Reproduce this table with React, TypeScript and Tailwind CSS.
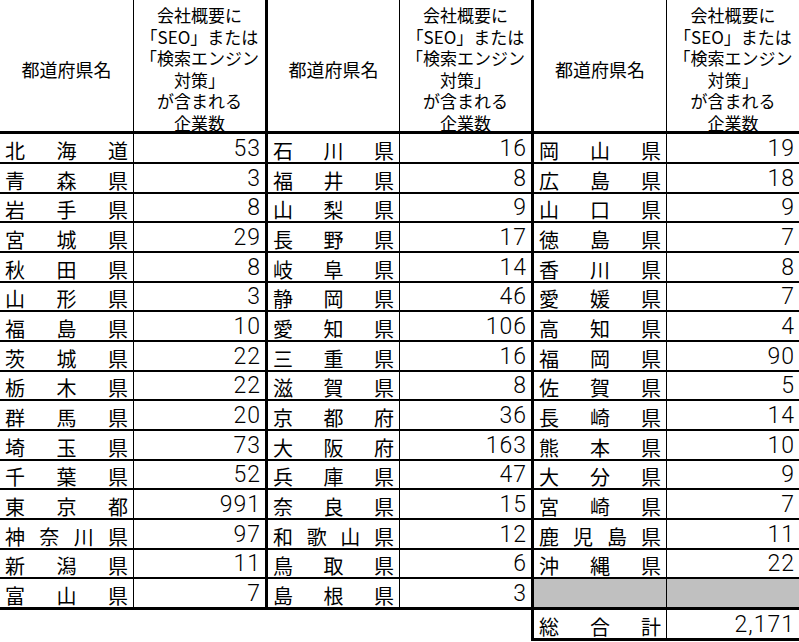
import React from 'react';

type Entry = [string, string];

const left: Entry[] = [
  ['北海道', '53'], ['青森県', '3'], ['岩手県', '8'], ['宮城県', '29'],
  ['秋田県', '8'], ['山形県', '3'], ['福島県', '10'], ['茨城県', '22'],
  ['栃木県', '22'], ['群馬県', '20'], ['埼玉県', '73'], ['千葉県', '52'],
  ['東京都', '991'], ['神奈川県', '97'], ['新潟県', '11'], ['富山県', '7'],
];

const middle: Entry[] = [
  ['石川県', '16'], ['福井県', '8'], ['山梨県', '9'], ['長野県', '17'],
  ['岐阜県', '14'], ['静岡県', '46'], ['愛知県', '106'], ['三重県', '16'],
  ['滋賀県', '8'], ['京都府', '36'], ['大阪府', '163'], ['兵庫県', '47'],
  ['奈良県', '15'], ['和歌山県', '12'], ['鳥取県', '6'], ['島根県', '3'],
];

const right: (Entry | null)[] = [
  ['岡山県', '19'], ['広島県', '18'], ['山口県', '9'], ['徳島県', '7'],
  ['香川県', '8'], ['愛媛県', '7'], ['高知県', '4'], ['福岡県', '90'],
  ['佐賀県', '5'], ['長崎県', '14'], ['熊本県', '10'], ['大分県', '9'],
  ['宮崎県', '7'], ['鹿児島県', '11'], ['沖縄県', '22'], null,
];

// row heights alternate so the lines land where the sheet draws them
const rowHeights = [
  'h-[30px]', 'h-[30px]', 'h-[29px]', 'h-[30px]', 'h-[30px]', 'h-[29px]',
  'h-[30px]', 'h-[30px]', 'h-[29px]', 'h-[30px]', 'h-[30px]', 'h-[29px]',
  'h-[30px]', 'h-[30px]', 'h-[29px]', 'h-[31px]',
];

const jp = "font-['Noto_Sans_CJK_JP',sans-serif]";
const num = "font-['Roboto','Liberation_Sans',sans-serif] font-light";

const NameCell: React.FC<{ name: string; className: string }> = ({ name, className }) => (
  <div className={`${className} flex items-end justify-between px-[5px] pb-[1px] ${jp} text-[20px] leading-none`}>
    {name.split('').map((ch, i) => (
      <span key={i}>{ch}</span>
    ))}
  </div>
);

const NumCell: React.FC<{ value: string; className: string }> = ({ value, className }) => (
  <div className={`${className} flex items-end justify-end pr-[4px] pb-[2px] ${num} text-[23px] leading-none tracking-[1px]`}>
    {value}
  </div>
);

const HeaderName: React.FC<{ className: string }> = ({ className }) => (
  <div className={`${className} flex items-center justify-center pt-[8px] ${jp} text-[18px]`}>
    都道府県名
  </div>
);

const HeaderCount: React.FC<{ className: string }> = ({ className }) => (
  <div className={`${className} overflow-hidden pt-[4px] text-center ${jp} text-[17px] leading-[21.6px]`}>
    <div>会社概要に</div>
    <div>「SEO」または</div>
    <div>「検索エンジン</div>
    <div>対策」</div>
    <div>が含まれる</div>
    <div>企業数</div>
  </div>
);

const App: React.FC = () => {
  return (
    <div className="w-[799px] h-[642px] overflow-hidden bg-white text-black">
      {/* Header */}
      <div className="flex h-[134px] border-b-[3px] border-black">
        <HeaderName className="w-[134px] border-r border-black" />
        <HeaderCount className="w-[134px] border-r-[3px] border-black" />
        <HeaderName className="w-[132px] border-r border-black" />
        <HeaderCount className="w-[134px] border-r-[3px] border-black" />
        <HeaderName className="w-[133px] border-r border-black" />
        <HeaderCount className="flex-1" />
      </div>

      {/* Rows */}
      {rowHeights.map((h, i) => {
        const r = right[i];
        const last = i === rowHeights.length - 1;
        return (
          <div
            key={i}
            className={`flex ${h} ${last ? 'border-b-[3px]' : 'border-b-2'} border-black`}
          >
            <NameCell name={left[i][0]} className="w-[134px] border-r border-black" />
            <NumCell value={left[i][1]} className="w-[134px] border-r-[3px] border-black" />
            <NameCell name={middle[i][0]} className="w-[132px] border-r border-black" />
            <NumCell value={middle[i][1]} className="w-[134px] border-r-[3px] border-black" />
            {r ? (
              <>
                <NameCell name={r[0]} className="w-[133px] border-r border-black" />
                <NumCell value={r[1]} className="flex-1" />
              </>
            ) : (
              <>
                <div className="w-[133px] border-r border-black bg-[#c0c0c0]" />
                <div className="flex-1 bg-[#c0c0c0]" />
              </>
            )}
          </div>
        );
      })}

      {/* Total */}
      <div className="flex h-[31px]">
        <div className="w-[134px]" />
        <div className="w-[134px]" />
        <div className="w-[132px]" />
        <div className="w-[134px] border-r-[3px] border-black" />
        <NameCell name="総合計" className="w-[133px] border-r border-b-[3px] border-black" />
        <NumCell value="2,171" className="flex-1 border-b-[3px] border-black" />
      </div>
    </div>
  );
};

export default App;
